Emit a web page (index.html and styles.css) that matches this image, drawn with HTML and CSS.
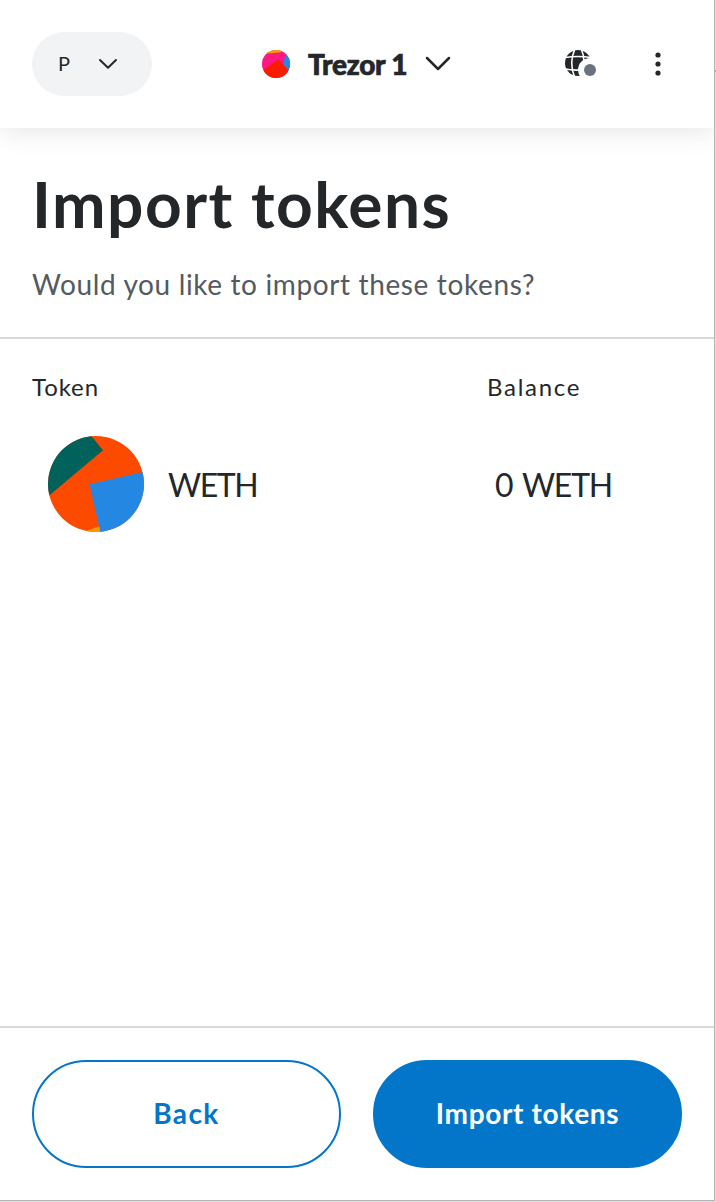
FILE: index.html
```
<!DOCTYPE html>
<html lang="en">
<head>
    <meta charset="UTF-8">
    <meta name="viewport" content="width=device-width, initial-scale=1.0">
    <title>Import tokens</title>
    <link rel="stylesheet" href="styles.css">
</head>
<body>
    <div class="popup">
        <header class="app-header">
            <button type="button" class="network-picker">
                <span class="network-letter">P</span>
                <svg width="20" height="12" viewBox="0 0 20 12"><path d="M2 2l8 7.8L18 2" /></svg>
            </button>

            <button type="button" class="account-picker">
                <svg class="account-avatar" width="28" height="28" viewBox="0 0 28 28">
                    <clipPath id="accountClip"><circle cx="14" cy="14" r="14" /></clipPath>
                    <g clip-path="url(#accountClip)">
                        <rect width="28" height="28" fill="#fc1981" />
                        <path d="M5 0h14v2.2L5 3.4z" fill="#f99e01" />
                        <path d="M24.2 3.5L21 14l6 8 3-1V3z" fill="#2488e2" />
                        <path d="M0 20.8L16.3 9.5 28 22v8H0z" fill="#fa1c00" />
                    </g>
                </svg>
                <span class="account-name">Trezor 1</span>
                <svg class="account-arrow" width="26" height="16" viewBox="0 0 26 16"><path d="M2 2l11 11L24 2" /></svg>
            </button>

            <div class="header-actions">
                <svg width="32" height="28" viewBox="0 0 32 28">
                    <circle cx="13" cy="13" r="13" fill="#24272a" />
                    <g fill="none" stroke="#fff" stroke-width="1.6">
                        <path d="M9.500 0C6 8 6 18 9.500 27M16.500 0Q18.500 4 18.800 10" />
                        <path d="M0 7.500Q13 5.500 26 7.500M0 19Q7 20.500 16 20" />
                    </g>
                    <circle cx="25" cy="20" r="12" fill="#fff" />
                    <circle cx="25" cy="20" r="6" fill="#6a737d" />
                </svg>
                <svg width="6" height="24" viewBox="0 0 6 24" fill="#24272a">
                    <circle cx="3" cy="3" r="2.6" />
                    <circle cx="3" cy="12" r="2.6" />
                    <circle cx="3" cy="21" r="2.6" />
                </svg>
            </div>
        </header>

        <div class="page-title">
            <h1>Import tokens</h1>
            <p>Would you like to import these tokens?</p>
        </div>

        <main class="token-list">
            <div class="list-row list-head">
                <span class="label-token">Token</span>
                <span class="label-balance">Balance</span>
            </div>
            <div class="list-row token-row">
                <div class="token">
                    <svg width="96" height="96" viewBox="0 0 96 96">
                        <clipPath id="tokenClip"><circle cx="48" cy="48" r="48" /></clipPath>
                        <g clip-path="url(#tokenClip)">
                            <rect width="96" height="96" fill="#fc4b00" />
                            <path d="M0 60.500L55 14.300 42.500-1H0z" fill="#01615b" />
                            <path d="M34 96.500L52 90v8H34z" fill="#fa9a00" />
                            <path d="M41.500 48.300L97 35.500V98H53z" fill="#2488e2" />
                        </g>
                    </svg>
                    <span class="token-symbol">WETH</span>
                </div>
                <span class="token-balance">0 WETH</span>
            </div>
        </main>

        <footer class="page-footer">
            <button type="button" class="btn btn-back">Back</button>
            <button type="button" class="btn btn-import">Import tokens</button>
        </footer>
    </div>
</body>
</html>
```

FILE: styles.css
```
* {
    margin: 0;
    padding: 0;
    box-sizing: border-box;
    font-family: Lato, "Open Sans", sans-serif;
}

body {
    width: 716px;
    height: 1202px;
    overflow: hidden;
    background: linear-gradient(#e2e2e2 70px, #aaa 70px, #aaa 72px, #e2e2e2 72px);
    color: #24272a;
}

button {
    border: none;
    background: none;
    color: inherit;
    cursor: pointer;
}

svg {
    display: block;
    flex: none;
}

.popup {
    width: 715px;
    height: 1201px;
    display: flex;
    flex-direction: column;
    background-color: #fff;
    border-right: 1px solid #b3b3b3;
    border-bottom: 1px solid #b3b3b3;
    white-space: nowrap;
    overflow: hidden;
}

/* Header */
.app-header {
    height: 128px;
    flex: none;
    padding: 0 53px 0 32px;
    display: grid;
    grid-template-columns: 230px 1fr 96px;
    align-items: center;
    box-shadow: 0 0 28px rgba(0, 0, 0, 0.13);
}

.network-picker {
    width: 120px;
    height: 64px;
    padding: 0 34px 0 26px;
    display: flex;
    align-items: center;
    justify-content: space-between;
    border-radius: 32px;
    background-color: #f2f3f4;
}

.network-letter {
    font-size: 20px;
    padding-bottom: 2px;
}

.network-picker path,
.account-arrow path {
    fill: none;
    stroke: #24272a;
    stroke-width: 2;
    stroke-linecap: round;
    stroke-linejoin: round;
}

.account-picker {
    display: flex;
    align-items: center;
}

.account-name {
    margin: 0 18px;
    font-size: 28px;
    font-weight: 900;
    letter-spacing: -0.25px;
    padding-bottom: 1px;
    -webkit-text-stroke: 0.7px #24272a;
}

.account-arrow path {
    stroke-width: 2.5;
}

.header-actions {
    display: flex;
    align-items: center;
    justify-content: space-between;
}

/* Title */
.page-title {
    height: 211px;
    flex: none;
    padding: 33px 32px 0;
    border-bottom: 2px solid #d7d8de;
}

.page-title h1 {
    font-size: 64px;
    font-weight: 700;
    line-height: 86px;
    letter-spacing: 1.5px;
}

.page-title p {
    margin-top: 17px;
    font-size: 28px;
    line-height: 40px;
    letter-spacing: 0.63px;
    color: #535a61;
}

/* Tokens */
.token-list {
    flex: 1;
    padding: 30px 32px;
}

.list-row {
    display: grid;
    grid-template-columns: 455px 1fr;
    align-items: center;
}

.list-head {
    font-size: 24px;
    line-height: 36px;
}

.label-token {
    letter-spacing: 0.9px;
}

.label-balance {
    letter-spacing: 1.7px;
}

.token-row {
    padding: 31px 0 0 16px;
    grid-template-columns: 447px 1fr;
    font-size: 32px;
}

.token {
    display: flex;
    align-items: center;
    gap: 24px;
}

.token-symbol {
    letter-spacing: -1.4px;
}

.token-balance {
    letter-spacing: -1.2px;
    word-spacing: 3px;
}

/* Footer */
.page-footer {
    height: 174px;
    flex: none;
    padding: 32px;
    display: flex;
    gap: 32px;
    border-top: 2px solid #d7d8de;
}

.btn {
    flex: 1;
    height: 108px;
    padding-bottom: 3px;
    border: 2px solid #0376c9;
    border-radius: 54px;
    font-size: 28px;
    font-weight: 700;
}

.btn-back {
    color: #0376c9;
    letter-spacing: 1.4px;
}

.btn-import {
    background-color: #0376c9;
    color: #fff;
    letter-spacing: 0.65px;
}
```
